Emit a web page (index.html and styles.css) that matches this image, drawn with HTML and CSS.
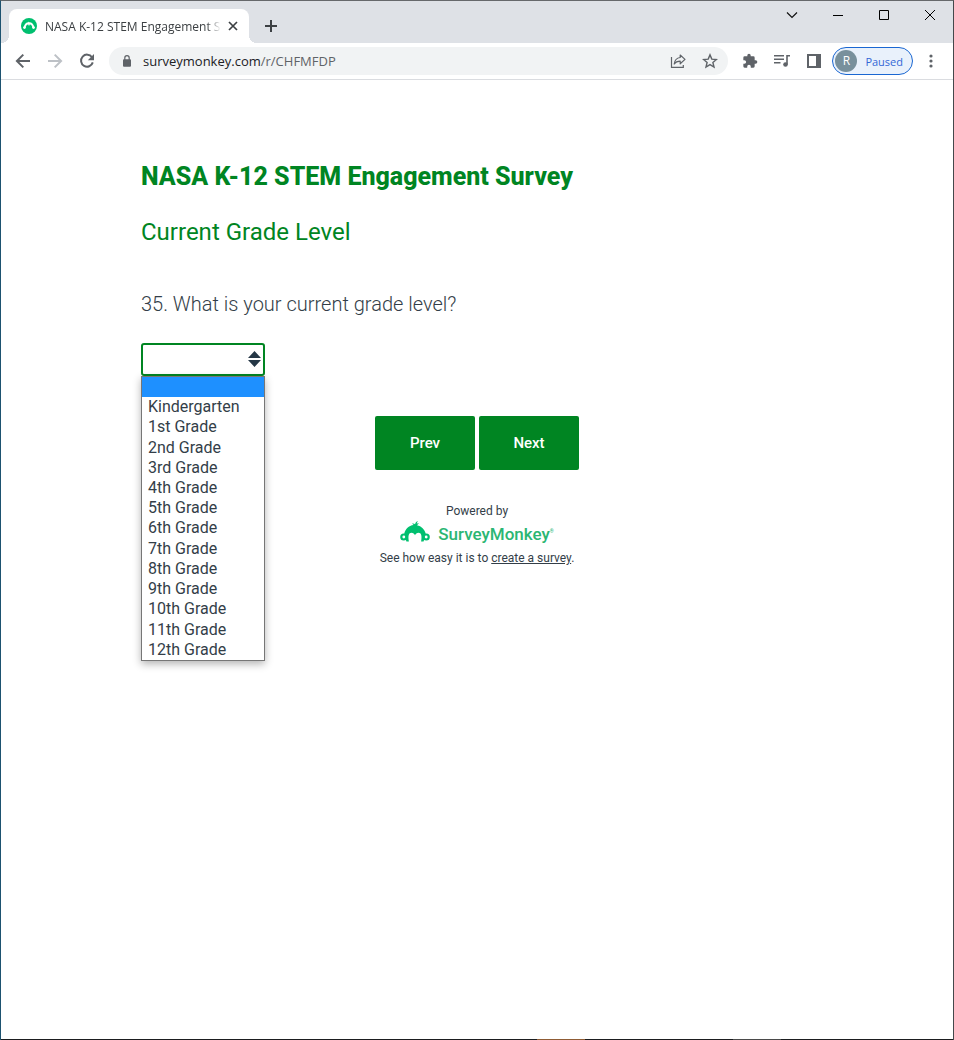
FILE: index.html
```html
<!DOCTYPE html>
<html lang="en">

<head>
    <meta charset="UTF-8">
    <meta name="viewport" content="width=device-width, initial-scale=1.0">
    <title>NASA K-12 STEM Engagement Survey</title>
    <link rel="stylesheet" href="styles.css">
</head>

<body>
    <div class="window">

        <!-- Tab strip -->
        <header class="tab-strip">
            <div class="tab">
                <svg class="favicon" viewBox="0 0 16 16" aria-hidden="true">
                    <circle cx="8" cy="8" r="8" fill="#00bf6f" />
                    <path d="M3.6 10.2C3.9 6.9 5.7 5.3 8 5.3s4.1 1.6 4.4 4.9" fill="none" stroke="#fff" stroke-width="1.9" />
                    <circle cx="3.4" cy="9.6" r="1.3" fill="#fff" />
                    <circle cx="12.6" cy="9.6" r="1.3" fill="#fff" />
                    <path d="M6.6 6.2L8 7.8l1.4-1.6zM7.6 5.6L7 3.6l1.6 1.2z" fill="#fff" />
                </svg>
                <span class="tab-title">NASA K-12 STEM Engagement Su</span>
                <button class="icon-btn tab-close" aria-label="Close tab">
                    <svg width="10" height="10" viewBox="0 0 10 10"><path d="M1 1l8 8M9 1L1 9" stroke="#3c4043" stroke-width="1.7" /></svg>
                </button>
            </div>
            <button class="icon-btn new-tab" aria-label="New tab">
                <svg width="14" height="14" viewBox="0 0 14 14"><path d="M7 1v12M1 7h12" stroke="#3c4043" stroke-width="2" /></svg>
            </button>
            <div class="window-controls">
                <button class="icon-btn" aria-label="Search tabs">
                    <svg width="12" height="12" viewBox="0 0 12 12"><path d="M1 3.5l5 5 5-5" fill="none" stroke="#111" stroke-width="1.2" /></svg>
                </button>
                <button class="icon-btn" aria-label="Minimize">
                    <svg width="10" height="10" viewBox="0 0 10 10"><path d="M0 5.5h10" stroke="#000" /></svg>
                </button>
                <button class="icon-btn" aria-label="Maximize">
                    <svg width="10" height="10" viewBox="0 0 10 10"><path d="M.5.5h9v9h-9z" fill="none" stroke="#000" /></svg>
                </button>
                <button class="icon-btn" aria-label="Close">
                    <svg width="10" height="10" viewBox="0 0 10 10"><path d="M0 0l10 10M10 0L0 10" stroke="#000" /></svg>
                </button>
            </div>
        </header>

        <!-- Toolbar -->
        <nav class="toolbar">
            <button class="icon-btn nav-btn" aria-label="Back">
                <svg width="16" height="16" viewBox="0 0 16 16"><path d="M15 8H2M8.3 1.6L1.9 8l6.4 6.4" fill="none" stroke="#5f6368" stroke-width="2" /></svg>
            </button>
            <button class="icon-btn nav-btn" aria-label="Forward" disabled>
                <svg width="16" height="16" viewBox="0 0 16 16"><path d="M1 8h13M7.7 1.6L14.1 8l-6.4 6.4" fill="none" stroke="#bdc1c6" stroke-width="2" /></svg>
            </button>
            <button class="icon-btn nav-btn" aria-label="Reload">
                <svg width="16" height="16" viewBox="0 0 16 16"><path d="M13 4.2A6 6 0 1 0 13.8 9.4" fill="none" stroke="#5f6368" stroke-width="2" /><path d="M15 1v6.2H8.8z" fill="#5f6368" /></svg>
            </button>

            <div class="address-bar">
                <svg class="lock" width="10" height="12" viewBox="0 0 10 12" aria-hidden="true">
                    <rect x="1" y="4.3" width="8" height="7.4" rx="1" fill="#5f6368" />
                    <path d="M2.8 5V2.9a2.2 2.2 0 0 1 4.4 0V5" fill="none" stroke="#5f6368" stroke-width="1.2" />
                </svg>
                <a class="url" href="#">surveymonkey.com<span class="url-path">/r/CHFMFDP</span></a>
                <button class="icon-btn" aria-label="Share this page">
                    <svg width="16" height="16" viewBox="0 0 16 16"><path d="M1.5 4v10.3h11.8V12" fill="none" stroke="#5f6368" stroke-width="1.2" /><path d="M10.2 2l4.8 4.4-4.8 4.4V8.2c-2.7 0-4.7.8-6 2.8.4-3.4 2.3-6 6-6.5z" fill="none" stroke="#5f6368" stroke-width="1.2" stroke-linejoin="round" /></svg>
                </button>
                <button class="icon-btn" aria-label="Bookmark this tab">
                    <svg width="16" height="16" viewBox="0 0 16 16"><path d="M8 1.9l1.8 4.2 4.6.4-3.5 3L12 14l-4-2.4L4 14l1.1-4.5-3.5-3 4.6-.4z" fill="none" stroke="#5f6368" stroke-width="1.4" /></svg>
                </button>
            </div>

            <button class="icon-btn tool-btn" aria-label="Extensions">
                <svg width="16" height="16" viewBox="0 0 24 24"><path d="M20.5 11H19V7a2 2 0 0 0-2-2h-4V3.5a2.5 2.5 0 0 0-5 0V5H4a2 2 0 0 0-2 2v3.8h1.5a2.7 2.7 0 0 1 0 5.4H2V20a2 2 0 0 0 2 2h3.8v-1.5a2.7 2.7 0 0 1 5.4 0V22H17a2 2 0 0 0 2-2v-4h1.5a2.5 2.5 0 0 0 0-5z" fill="#5f6368" /></svg>
            </button>
            <button class="icon-btn tool-btn" aria-label="Media controls">
                <svg width="16" height="14" viewBox="0 0 16 14"><path d="M0 1.8h10M0 5.3h10M0 8.8h6.5" stroke="#5f6368" stroke-width="1.5" /><path d="M16 1.8h-3v8.7" fill="none" stroke="#5f6368" stroke-width="1.6" /><circle cx="11.5" cy="10.5" r="2.3" fill="#5f6368" /></svg>
            </button>
            <button class="icon-btn tool-btn" aria-label="Side panel">
                <svg width="14" height="14" viewBox="0 0 14 14"><path d="M0 0h14v14H0zM2 2v10h7V2z" fill="#5f6368" fill-rule="evenodd" /></svg>
            </button>
            <button class="profile"><span class="avatar">R</span>Paused</button>
            <button class="icon-btn menu-btn" aria-label="Menu">
                <svg width="4" height="14" viewBox="0 0 4 14" fill="#5f6368"><circle cx="2" cy="2" r="1.6" /><circle cx="2" cy="7" r="1.6" /><circle cx="2" cy="12" r="1.6" /></svg>
            </button>
        </nav>

        <!-- Survey page -->
        <main class="survey">
            <h1>NASA K-12 STEM Engagement Survey</h1>
            <h2>Current Grade Level</h2>

            <form class="survey-form">
                <label class="question" for="grade">35. What is your current grade level?</label>
                <div class="dropdown">
                    <select id="grade" class="grade-select">
                        <option value=""></option>
                    </select>
                    <svg class="arrows" width="13" height="16" viewBox="0 0 13 16" aria-hidden="true"><path d="M6.5 0L13 7H0zM0 9h13l-6.5 7z" fill="#253746" /></svg>
                    <ul class="options" role="listbox" aria-label="Grade level">
                        <li class="selected" role="option" aria-selected="true"></li>
                        <li role="option">Kindergarten</li>
                        <li role="option">1st Grade</li>
                        <li role="option">2nd Grade</li>
                        <li role="option">3rd Grade</li>
                        <li role="option">4th Grade</li>
                        <li role="option">5th Grade</li>
                        <li role="option">6th Grade</li>
                        <li role="option">7th Grade</li>
                        <li role="option">8th Grade</li>
                        <li role="option">9th Grade</li>
                        <li role="option">10th Grade</li>
                        <li role="option">11th Grade</li>
                        <li role="option">12th Grade</li>
                    </ul>
                </div>
                <div class="actions">
                    <button type="button" class="btn">Prev</button>
                    <button type="button" class="btn">Next</button>
                </div>
            </form>

            <footer class="powered">
                <div>Powered by</div>
                <a class="brand" href="#">
                    <svg width="30" height="22" viewBox="0 0 30 22" aria-hidden="true" fill="#00bf6f">
                        <path d="M4.2 13C5.3 8 8.8 4.6 13.6 4.1L12 2.6c1.3-.2 2.4 0 3.1.7C15.3 1.6 16.2.5 18 .2c-.8.8-1.2 1.5-1.3 2.3l2.3-.3-2 2c4.4.8 7.7 4.1 8.8 8.8l-2.2 7.5h-2.5c1-5.5.2-8.7-2.6-8.7-1.6 0-2.9.9-3.5 2.4-.6-1.5-1.9-2.4-3.5-2.4-2.8 0-3.6 3.2-2.6 8.7H6.4z" />
                        <circle cx="3.7" cy="16" r="3.5" />
                        <circle cx="26.3" cy="16" r="3.5" />
                        <circle cx="3.8" cy="16" r="1.4" fill="#fff" />
                        <circle cx="26.2" cy="16" r="1.4" fill="#fff" />
                    </svg>
                    <span class="brand-name">SurveyMonkey<sup>®</sup></span>
                </a>
                <div>See how easy it is to <a class="create-link" href="#">create a survey</a>.</div>
            </footer>
        </main>

        <div class="taskbar-edge"></div>
    </div>
</body>

</html>
```

FILE: styles.css
```css
* {
    box-sizing: border-box;
}

body {
    margin: 0;
    background: #fff;
    font-family: Roboto, sans-serif;
    color: #333e48;
}

button {
    font-family: inherit;
    cursor: pointer;
}

.window {
    display: flex;
    flex-direction: column;
    min-height: 100vh;
    border-top: 1px solid #66686b;
    border-left: 1px solid #1d5270;
    border-right: 1px solid #44484b;
}

.icon-btn {
    display: flex;
    align-items: center;
    justify-content: center;
    width: 16px;
    height: 16px;
    padding: 0;
    border: none;
    background: none;
    flex: none;
}

/* Tab strip */
.tab-strip {
    display: flex;
    align-items: flex-end;
    height: 42px;
    padding-left: 8px;
    background: #dee1e6;
    font-family: "Open Sans", sans-serif;
}

.tab {
    position: relative;
    display: flex;
    align-items: center;
    width: 240px;
    height: 34px;
    padding: 0 8px 0 12px;
    border-radius: 8px 8px 0 0;
    background: #fff;
}

.tab::before,
.tab::after {
    content: "";
    position: absolute;
    bottom: 0;
    width: 8px;
    height: 8px;
}

.tab::before {
    right: 100%;
    background: radial-gradient(circle at 0 0, #dee1e6 8px, #fff 8px);
}

.tab::after {
    left: 100%;
    background: radial-gradient(circle at 100% 0, #dee1e6 8px, #fff 8px);
}

.favicon {
    width: 16px;
    height: 16px;
    margin-right: 8px;
    flex: none;
}

.tab-title {
    flex: 1;
    min-width: 0;
    white-space: nowrap;
    font-size: 12px;
    color: #3c4043;
    -webkit-mask-image: linear-gradient(to right, #000 92%, transparent);
    mask-image: linear-gradient(to right, #000 92%, transparent);
}

.tab-close {
    margin-left: 4px;
}

.new-tab {
    width: 28px;
    height: 34px;
    margin-left: 8px;
}

.window-controls {
    display: flex;
    align-self: flex-start;
    margin-left: auto;
}

.window-controls .icon-btn {
    width: 46px;
    height: 28px;
}

/* Toolbar */
.toolbar {
    display: flex;
    align-items: center;
    height: 37px;
    padding: 0 6px;
    border-bottom: 1px solid #dadce0;
    font-family: "Open Sans", sans-serif;
}

.nav-btn,
.tool-btn {
    width: 32px;
    height: 28px;
}

.address-bar {
    display: flex;
    align-items: center;
    flex: 1;
    gap: 16px;
    height: 28px;
    margin: 0 6px;
    padding: 0 10px 0 13px;
    border-radius: 14px;
    background: #f1f3f4;
}

.url {
    flex: 1;
    margin-left: -5px;
    font-size: 13px;
    color: #202124;
    text-decoration: none;
}

.url-path {
    color: #5f6368;
}

.profile {
    display: flex;
    align-items: center;
    gap: 8px;
    height: 28px;
    margin: 0 2px;
    padding: 0 9px 0 2px;
    border: 1px solid #1a67d2;
    border-radius: 14px;
    background: #e9f1fb;
    font-size: 11px;
    color: #3367d6;
}

.avatar {
    width: 22px;
    height: 22px;
    border-radius: 50%;
    background: #78909c;
    font-size: 12px;
    line-height: 22px;
    text-align: center;
    color: #fff;
}

.menu-btn {
    width: 32px;
}

/* Survey */
.survey {
    flex: 1;
    width: 100%;
    max-width: 672px;
    margin: 0 auto;
    padding-top: 80px;
}

h1 {
    margin: 0;
    font-size: 25px;
    line-height: 34px;
    font-weight: 800;
    color: #008522;
}

h2 {
    margin: 22px 0 0;
    font-size: 24px;
    line-height: 32px;
    font-weight: 400;
    color: #008522;
}

.survey-form {
    margin-top: 42px;
}

.question {
    display: block;
    font-size: 20px;
    line-height: 28px;
    font-weight: 300;
}

.dropdown {
    position: relative;
    width: 124px;
    margin-top: 25px;
}

.grade-select {
    display: block;
    width: 100%;
    height: 33px;
    padding: 0 24px 0 6px;
    border: 2px solid #008522;
    border-radius: 3px;
    outline: none;
    background: #fff;
    font-family: inherit;
    font-size: 16px;
    appearance: none;
}

.arrows {
    position: absolute;
    top: 8px;
    right: 4px;
    pointer-events: none;
}

.options {
    position: absolute;
    top: 100%;
    left: 0;
    display: grid;
    grid-auto-rows: 1fr;
    width: 100%;
    height: 285px;
    margin: 0;
    padding: 0;
    border: 1px solid #767676;
    background: #fff;
    box-shadow: 0 3px 8px rgba(0, 0, 0, 0.3);
    font-size: 16px;
    line-height: 20px;
    list-style: none;
}

.options li {
    padding-left: 6px;
}

.options .selected {
    background: #1e90ff;
}

.actions {
    display: flex;
    justify-content: center;
    gap: 4px;
    margin-top: 40px;
}

.btn {
    width: 100px;
    height: 54px;
    border: none;
    border-radius: 2px;
    background: #008522;
    font-size: 15px;
    font-weight: 500;
    color: #fff;
}

.powered {
    margin-top: 33px;
    font-size: 12px;
    line-height: 16px;
    text-align: center;
}

.brand {
    display: flex;
    align-items: center;
    justify-content: center;
    gap: 8px;
    height: 24px;
    margin: 1px 0 6px;
    color: #2bb673;
    text-decoration: none;
}

.brand-name {
    font-size: 17px;
    line-height: 24px;
    font-weight: 500;
}

.brand-name sup {
    font-size: 5px;
}

.create-link {
    color: inherit;
}

/* Sliver of the taskbar under the window */
.taskbar-edge {
    height: 1px;
    background: linear-gradient(to right, #1b1d1f 536px, #8f5c35 536px, #8f5c35 584px, #1b1d1f 584px, #1b1d1f 732px, #4a4a4a 732px, #4a4a4a 780px, #1b1d1f 780px);
}
```
